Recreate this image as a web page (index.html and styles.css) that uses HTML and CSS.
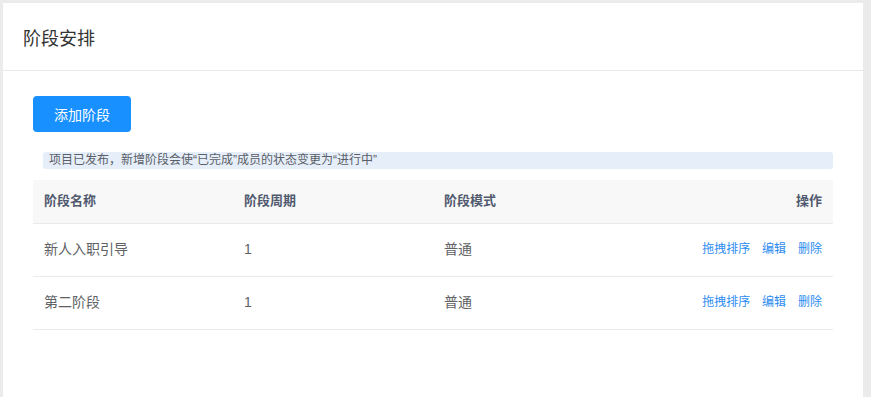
FILE: index.html
```html
<!DOCTYPE html>
<html lang="zh-CN">
<head>
    <meta charset="UTF-8">
    <meta name="viewport" content="width=device-width, initial-scale=1.0">
    <title>阶段安排</title>
    <link rel="stylesheet" href="styles.css">
</head>
<body>
    <div class="card">
        <div class="card-header">
            <h2>阶段安排</h2>
        </div>
        <div class="card-body">
            <button type="button" class="add-btn">添加阶段</button>
            <div class="notice">项目已发布，新增阶段会使“已完成”成员的状态变更为“进行中”</div>
            <table class="stage-table">
                <thead>
                    <tr>
                        <th>阶段名称</th>
                        <th>阶段周期</th>
                        <th>阶段模式</th>
                        <th class="ops">操作</th>
                    </tr>
                </thead>
                <tbody>
                    <tr>
                        <td>新人入职引导</td>
                        <td>1</td>
                        <td>普通</td>
                        <td class="ops">
                            <a href="#">拖拽排序</a>
                            <a href="#">编辑</a>
                            <a href="#">删除</a>
                        </td>
                    </tr>
                    <tr>
                        <td>第二阶段</td>
                        <td>1</td>
                        <td>普通</td>
                        <td class="ops">
                            <a href="#">拖拽排序</a>
                            <a href="#">编辑</a>
                            <a href="#">删除</a>
                        </td>
                    </tr>
                </tbody>
            </table>
        </div>
    </div>
</body>
</html>
```

FILE: styles.css
```css
* {
    margin: 0;
    padding: 0;
    box-sizing: border-box;
    font-family: "Liberation Sans", "Noto Sans CJK SC", sans-serif;
}

html, body {
    height: 100%;
}

body {
    background: #ebebeb;
    color: #333;
    overflow: hidden;
    padding: 3px 0 0 3px;
}

.card {
    width: 860px;
    height: 100%;
    background: #fff;
}

.card-header {
    height: 68px;
    padding: 0 20px;
    display: flex;
    align-items: center;
    border-bottom: 1px solid #e8e8e8;
}

.card-header h2 {
    font-size: 18px;
    font-weight: normal;
    color: #333;
}

.card-body {
    padding: 25px 30px 0;
}

.add-btn {
    width: 98px;
    height: 36px;
    background: #1890ff;
    color: #fff;
    border: none;
    border-radius: 4px;
    font-size: 14px;
    cursor: pointer;
}

.notice {
    margin: 20px 0 11px 10px;
    height: 17px;
    line-height: 17px;
    padding: 0 6px;
    background: #e6eefa;
    border-radius: 3px;
    font-size: 12px;
    color: #5a5e66;
}

.stage-table {
    width: 800px;
    border-collapse: collapse;
    table-layout: fixed;
}

.stage-table th,
.stage-table td {
    text-align: left;
    padding: 0 11px;
    border-bottom: 1px solid #e8eaec;
    line-height: 20px;
}

.stage-table th {
    height: 43px;
    background: #f8f8f9;
    font-size: 13px;
    font-weight: bold;
    color: #515a6e;
}

.stage-table td {
    height: 53px;
    padding-bottom: 2px;
    font-size: 14px;
    color: #606266;
}

.stage-table th:nth-child(1),
.stage-table th:nth-child(2),
.stage-table th:nth-child(3) {
    width: 200px;
}

.stage-table .ops {
    text-align: right;
}

.ops a {
    font-size: 12px;
    color: #2d8cf0;
    text-decoration: none;
    margin-left: 8px;
}
```
